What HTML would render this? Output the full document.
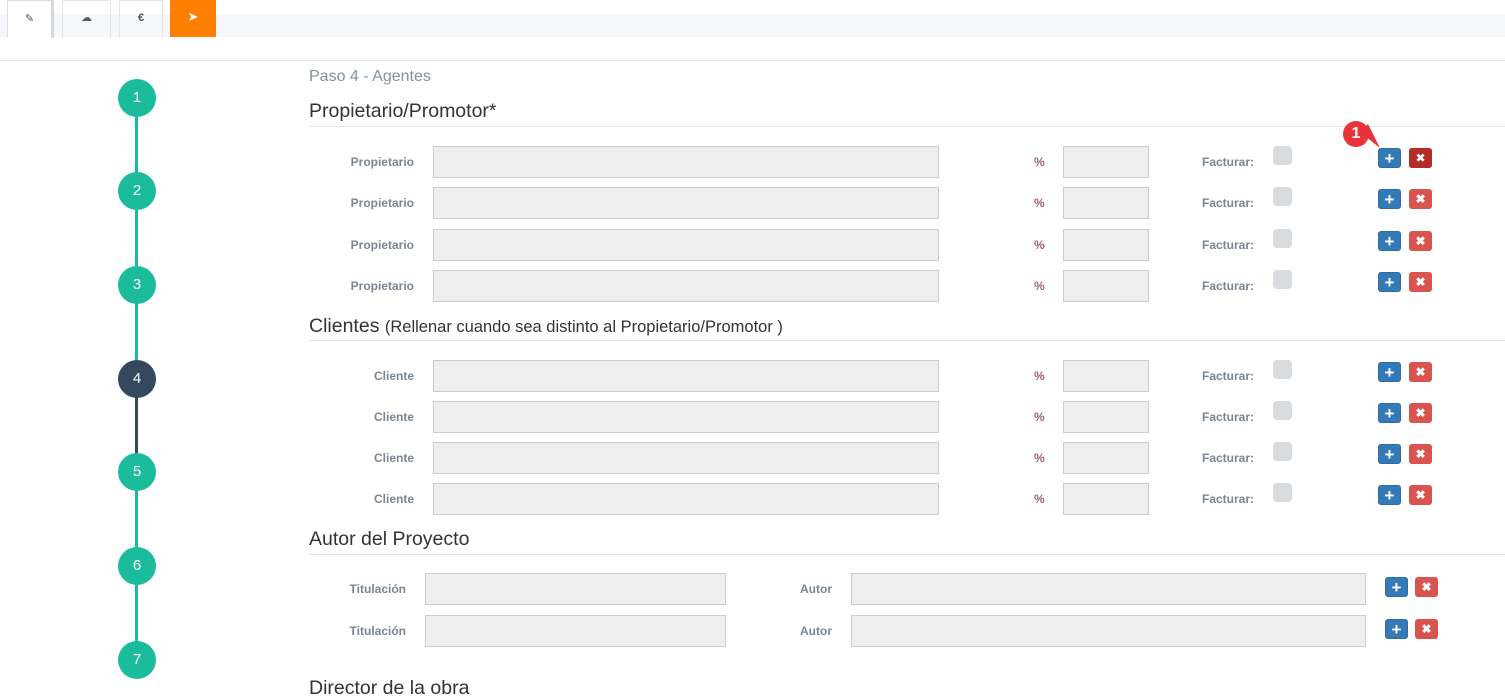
<!DOCTYPE html><html><head><style>
body{margin:0;width:1505px;height:698px;overflow:hidden;background:#fff;font-family:"Liberation Sans",sans-serif;position:relative}
.a{position:absolute}
.inp{position:absolute;background:#eee;border:1px solid #ccc;box-sizing:border-box;height:32px}
.lbl{position:absolute;font-size:12px;font-weight:bold;color:#7a8595;text-align:right}
.pct{position:absolute;font-size:12px;font-weight:bold;color:#a0607a}
.cb{position:absolute;width:19px;height:19px;background:#d8dcdf;border-radius:4px}
.bp,.bx{position:absolute;width:23px;height:20px;border-radius:3px;color:#fff;font-size:17px;font-weight:bold;text-align:center;line-height:20px}
.bp{background:#337ab7;border:1px solid #2e6da4;box-sizing:border-box}
.bx{background:#d9534f;font-size:12px}
.c{position:absolute;left:118px;width:38px;height:38px;border-radius:50%;background:#1abc9c;color:#fff;font-size:15px;text-align:center;line-height:38px}
h{position:absolute;left:309px;font-size:19.5px;color:#333}
.hr{position:absolute;left:309px;right:0;height:1px;background:#e3e3e3}
</style></head><body>
<div class="a" style="left:0;top:14px;width:1505px;height:23px;background:#f5f6fa"></div>
<div class="a" style="left:7px;top:0;width:43px;height:37px;background:#fff;border:1px solid #ddd;border-right:3px solid #d5d8dc;border-bottom:none;text-align:center;line-height:37px;font-size:11px;color:#555">✎</div>
<div class="a" style="left:62px;top:0;width:47px;height:37px;border:1px solid #e4e6ea;border-bottom:none;text-align:center;line-height:34px;font-size:11px;color:#556">☁</div>
<div class="a" style="left:119px;top:0;width:42px;height:37px;border:1px solid #e4e6ea;border-bottom:none;text-align:center;line-height:34px;font-size:11px;color:#556;font-weight:bold">€</div>
<div class="a" style="left:170px;top:0;width:46px;height:37px;background:#ff8000;text-align:center;line-height:34px;color:#fff;font-size:13px">➤</div>
<div class="a" style="left:0;top:60px;width:1505px;height:1px;background:#ddd"></div>
<div class="a" style="left:135px;top:98px;width:3px;height:281px;background:#1abc9c"></div>
<div class="a" style="left:135px;top:379px;width:3px;height:93px;background:#34495e"></div>
<div class="a" style="left:135px;top:472px;width:3px;height:188px;background:#1abc9c"></div>
<div class="c" style="top:79px">1</div><div class="c" style="top:172px">2</div><div class="c" style="top:266px">3</div>
<div class="c" style="top:360px;background:#34495e">4</div><div class="c" style="top:453px">5</div><div class="c" style="top:547px">6</div><div class="c" style="top:641px">7</div>
<div class="a" style="left:309px;top:68px;font-size:16px;color:#8391a0">Paso 4 - Agentes</div>
<h style="top:100px">Propietario/Promotor*</h><div class="hr" style="top:126px"></div>
<h style="top:315px">Clientes <span style="font-size:16.5px">(Rellenar cuando sea distinto al Propietario/Promotor )</span></h><div class="hr" style="top:340px"></div>
<h style="top:528px">Autor del Proyecto</h><div class="hr" style="top:554px"></div>
<h style="top:677px">Director de la obra</h>
<div id="rows"></div>
<script>
var o='';
function row(y,l){o+='<div class="lbl" style="left:300px;width:114px;top:'+(y+9)+'px">'+l+'</div><div class="inp" style="left:433px;top:'+y+'px;width:506px"></div><div class="pct" style="left:1034px;top:'+(y+9)+'px">%</div><div class="inp" style="left:1063px;top:'+y+'px;width:86px"></div><div class="lbl" style="left:1202px;top:'+(y+9)+'px">Facturar:</div><div class="cb" style="left:1273px;top:'+y+'px"></div><div class="bp" style="left:1378px;top:'+(y+2)+'px">+</div><div class="bx" style="left:1409px;top:'+(y+2)+'px">✖</div>';}
[146,187,229,270].forEach(function(y){row(y,'Propietario')});
[360,401,442,483].forEach(function(y){row(y,'Cliente')});
[573,615].forEach(function(y){o+='<div class="lbl" style="left:300px;width:106px;top:'+(y+9)+'px">Titulación</div><div class="inp" style="left:425px;top:'+y+'px;width:301px"></div><div class="lbl" style="left:800px;top:'+(y+9)+'px">Autor</div><div class="inp" style="left:851px;top:'+y+'px;width:515px"></div><div class="bp" style="left:1385px;top:'+(y+4)+'px">+</div><div class="bx" style="left:1415px;top:'+(y+4)+'px">✖</div>';});
document.getElementById('rows').innerHTML=o;
</script>
<div class="a" style="left:1409px;top:148px;width:23px;height:20px;background:#b52b27;border-radius:3px;color:#fff;font-size:12px;text-align:center;line-height:20px">✖</div>
<div class="a" style="left:1343px;top:121px;width:26px;height:26px;border-radius:50%;background:#e8333a;color:#fff;font-weight:bold;font-size:16px;text-align:center;line-height:26px">1</div>
<svg class="a" style="left:1358px;top:124px" width="24" height="26"><polygon points="2,8 10,0 22,24" fill="#e8333a"/></svg>
</body></html>
